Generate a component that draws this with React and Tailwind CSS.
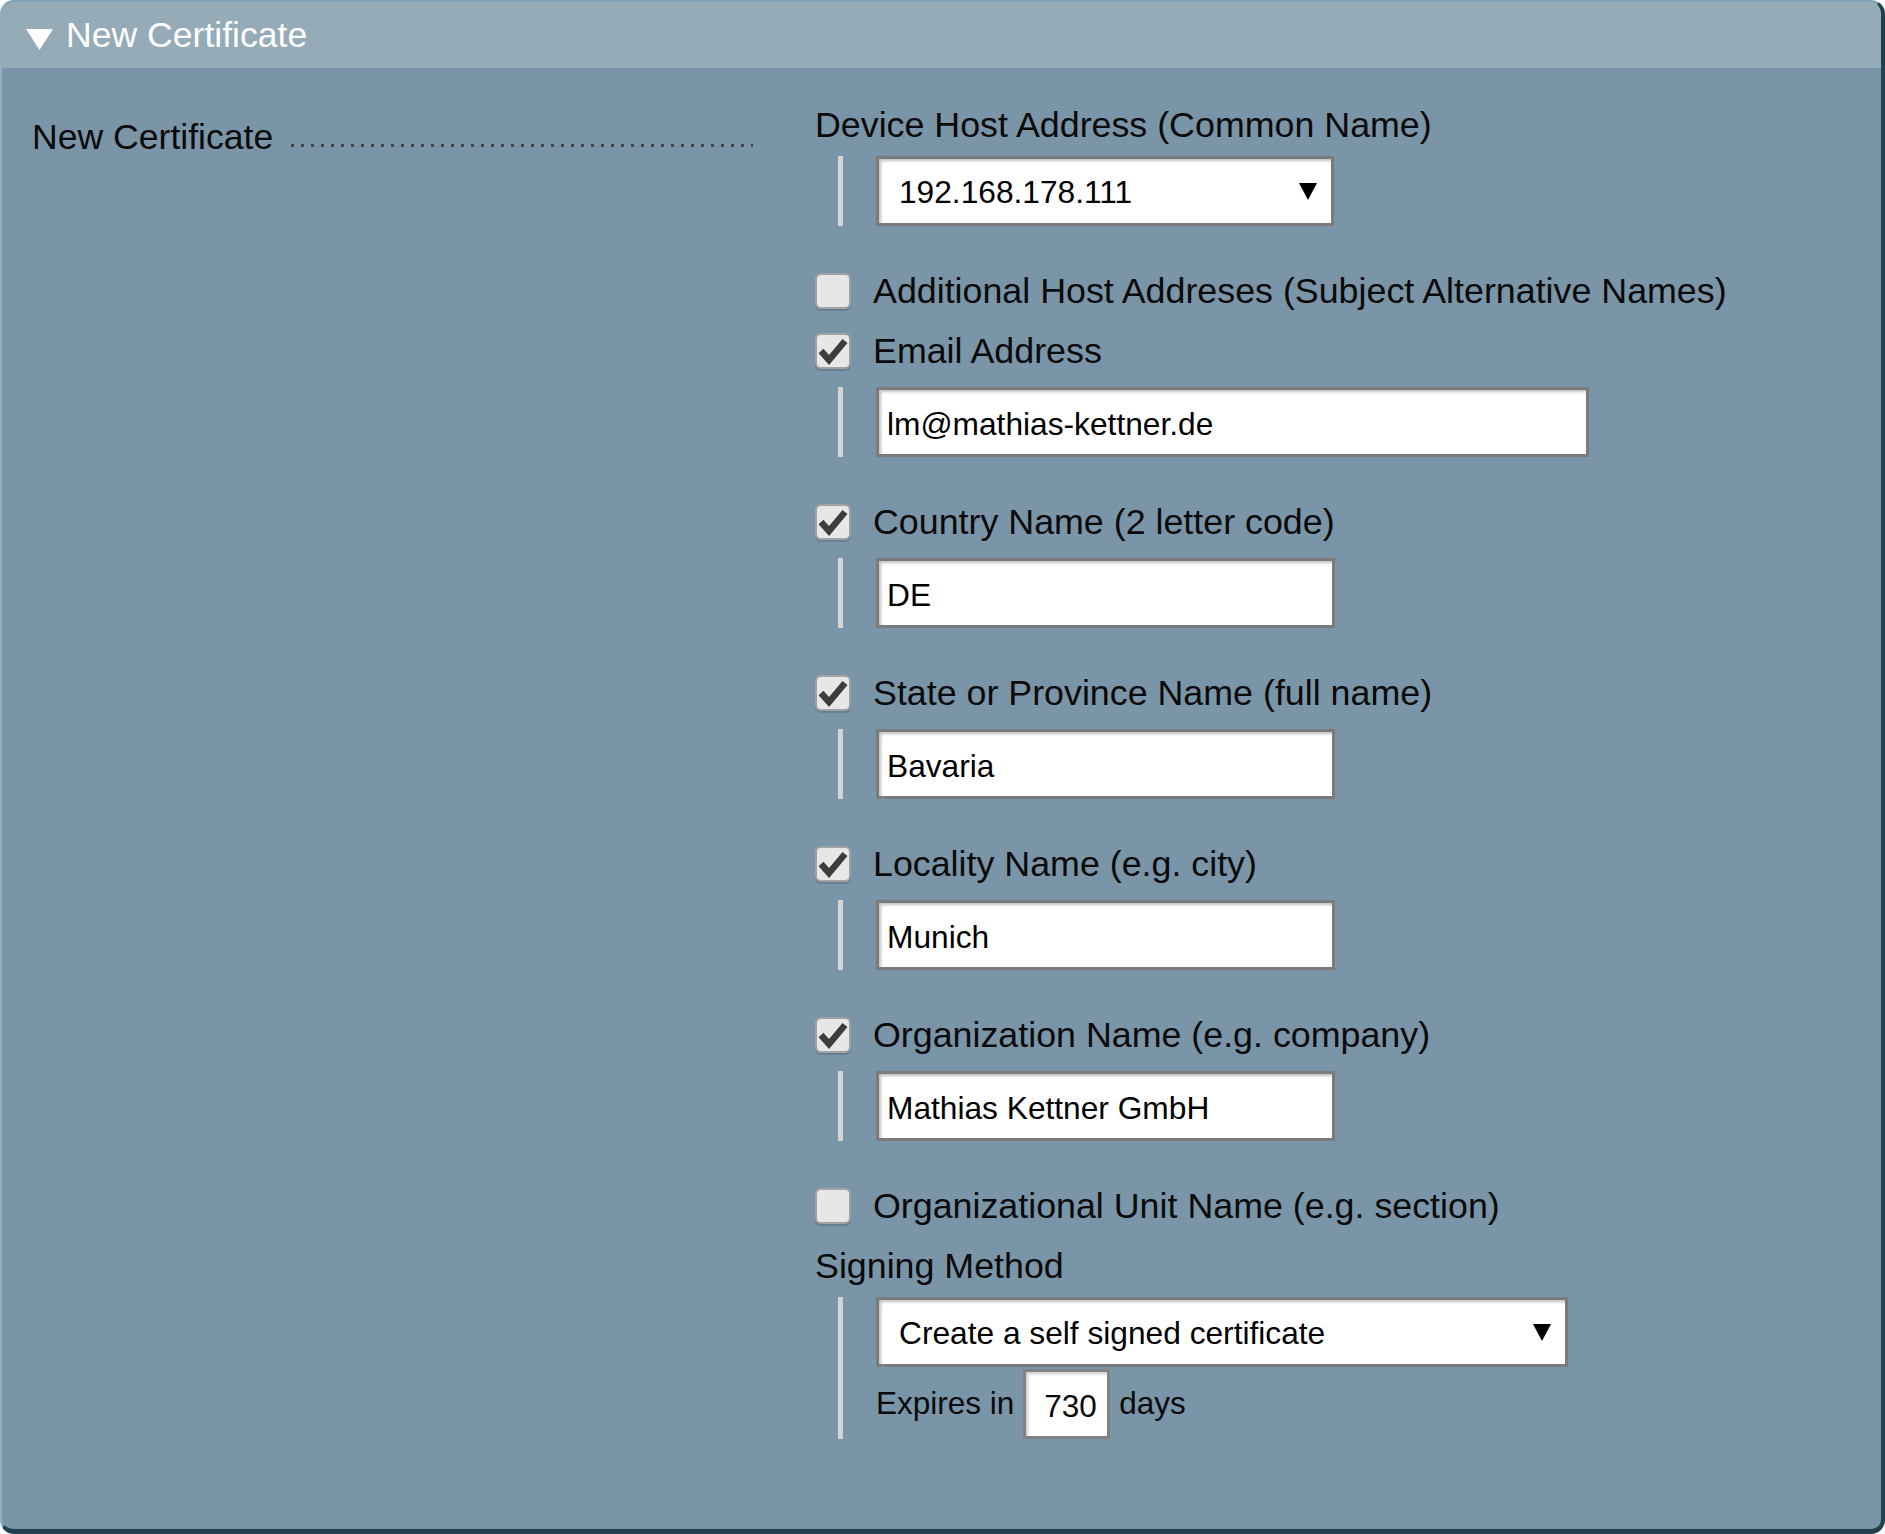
import React from 'react'

const font = { fontFamily: '"Liberation Sans", Arial, sans-serif' }

function Check({ checked }) {
  return (
    <div className="w-[36px] h-[36px] shrink-0 rounded-[6px] border-2 border-[#a2a2a2] bg-[#e7e7e7] shadow-[0_2px_1px_rgba(0,0,0,0.15)] flex items-center justify-center">
      {checked && (
        <svg width="32" height="32" viewBox="0 0 32 32">
          <path d="M4 16 L12 25 L28 6" fill="none" stroke="#3d3d3d" strokeWidth="6.5" strokeLinejoin="miter" />
        </svg>
      )}
    </div>
  )
}

function Arrow() {
  return (
    <svg width="18" height="17" viewBox="0 0 18 17" className="shrink-0">
      <polygon points="0,0 18,0 9,17" fill="#000" />
    </svg>
  )
}

function Nested({ children }) {
  return <div className="ml-[23px] border-l-[5px] border-[#d4d4d4] pl-[33px]">{children}</div>
}

function TextBox({ value, width }) {
  return (
    <div
      className={`${width} h-[70px] bg-white border-[3px] border-[#7b7b7b] shadow-[inset_2px_2px_3px_rgba(0,0,0,0.25)] flex items-center pl-[8px] pt-[6px] text-[31.7px] text-black`}
    >
      {value}
    </div>
  )
}

function Select({ value, width }) {
  return (
    <div
      className={`${width} h-[70px] bg-white border-[3px] border-[#7b7b7b] shadow-[inset_2px_2px_3px_rgba(0,0,0,0.25)] flex items-center justify-between pl-[20px] pr-[14px] text-[31.7px] text-black`}
    >
      <span className="pt-[4px]">{value}</span>
      <Arrow />
    </div>
  )
}

function CheckRow({ checked, label, className = '' }) {
  return (
    <div className={`flex items-center gap-[22px] h-[40px] ${className}`}>
      <Check checked={checked} />
      <span className="leading-[40px] whitespace-nowrap">{label}</span>
    </div>
  )
}

const fields = [
  { label: 'Country Name (2 letter code)', value: 'DE' },
  { label: 'State or Province Name (full name)', value: 'Bavaria' },
  { label: 'Locality Name (e.g. city)', value: 'Munich' },
  { label: 'Organization Name (e.g. company)', value: 'Mathias Kettner GmbH' },
]

export default function App() {
  return (
    <div className="w-[1885px] h-[1534px] bg-white" style={font}>
      <div className="w-full h-full flex flex-col rounded-[14px] overflow-hidden border-l-2 border-t-2 border-r-4 border-b-[5px] border-l-[#8fb0c0] border-t-[#7fa4b5] border-r-[#22404e] border-b-[#22404e] bg-[#7a95a7]">
        {/* Header */}
        <div className="h-[66px] shrink-0 bg-[#95abb8] flex items-center pl-[24px] gap-[13px]">
          <svg width="27" height="21" viewBox="0 0 27 21" className="mt-[8px]">
            <polygon points="0,0 27,0 13.5,21" fill="#fff" />
          </svg>
          <span className="text-white text-[35.6px] leading-[40px]">New Certificate</span>
        </div>

        {/* Body */}
        <div className="flex pt-[37px] text-[35.8px] text-[#0a0a0a]">
          <div className="w-[813px] shrink-0 pl-[30px] pr-[62px]">
            <div className="flex items-center h-[40px] mt-[12px]">
              <span className="leading-[40px] whitespace-nowrap text-[35.6px]">New Certificate</span>
              <div className="flex-1 ml-[18px] h-[3px] translate-y-[8px] bg-[linear-gradient(to_right,#444_3px,transparent_3px)] bg-[length:10px_3px] bg-repeat-x" />
            </div>
          </div>

          <div className="flex flex-col">
            <div className="leading-[40px] h-[40px]">Device Host Address (Common Name)</div>
            <div className="mt-[11px]">
              <Nested>
                <Select value="192.168.178.111" width="w-[458px]" />
              </Nested>
            </div>

            <CheckRow checked={false} label="Additional Host Addreses (Subject Alternative Names)" className="mt-[45px]" />
            <CheckRow checked label="Email Address" className="mt-[20px]" />
            <div className="mt-[16px]">
              <Nested>
                <TextBox value="lm@mathias-kettner.de" width="w-[713px]" />
              </Nested>
            </div>

            {fields.map((f) => (
              <div key={f.label}>
                <CheckRow checked label={f.label} className="mt-[45px]" />
                <div className="mt-[16px]">
                  <Nested>
                    <TextBox value={f.value} width="w-[459px]" />
                  </Nested>
                </div>
              </div>
            ))}

            <CheckRow checked={false} label="Organizational Unit Name (e.g. section)" className="mt-[45px]" />

            <div className="leading-[40px] h-[40px] mt-[20px]">Signing Method</div>
            <div className="mt-[11px]">
              <Nested>
                <Select value="Create a self signed certificate" width="w-[692px]" />
                <div className="flex items-center mt-[2px] text-[31.5px]">
                  <span>Expires in</span>
                  <div className="ml-[9px] w-[87px] h-[70px] bg-white border-[3px] border-[#828282] shadow-[inset_2px_2px_3px_rgba(0,0,0,0.2)] flex items-center pl-[18px] pt-[6px]">
                    730
                  </div>
                  <span className="ml-[9px]">days</span>
                </div>
              </Nested>
            </div>
          </div>
        </div>
      </div>
    </div>
  )
}
